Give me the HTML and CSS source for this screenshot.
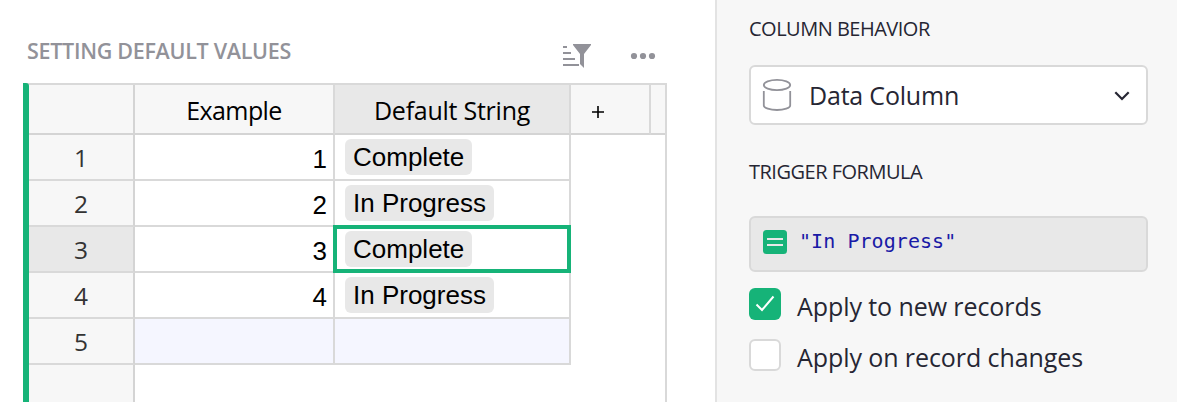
FILE: index.html
```html
<!DOCTYPE html>
<html lang="en">
<head>
<meta charset="utf-8">
<title>Setting default values</title>
<link rel="stylesheet" href="styles.css">
</head>
<body>
<div class="app">
  <main class="section">
    <header class="section-head">
      <h1 class="section-title">SETTING DEFAULT VALUES</h1>
      <svg class="icon-filter" width="30" height="26" viewBox="0 0 30 26">
        <path d="M1 3h4M1 9h8M1 15h12M1 21h16" fill="none" stroke="#929299" stroke-width="2"/>
        <path d="M11 0h18v1l-7 9v14l-4-4V10l-7-9z" fill="#929299"/>
      </svg>
      <svg class="icon-more" width="26" height="8" viewBox="0 0 26 8">
        <g fill="#929299"><circle cx="4" cy="4" r="3.1"/><circle cx="13" cy="4" r="3.1"/><circle cx="22" cy="4" r="3.1"/></g>
      </svg>
    </header>
    <div class="grid">
      <div class="row head">
        <div class="num"></div>
        <div class="cell c1">Example</div>
        <div class="cell c2 active"><span class="wide">Default String</span></div>
        <div class="cell add"><svg width="12" height="12" viewBox="0 0 12 12"><path d="M6 0v12M0 6h12" stroke="#000" stroke-width="1.6"/></svg></div>
        <div class="cell rest"></div>
      </div>
      <div class="row"><div class="num">1</div><div class="cell c1">1</div><div class="cell c2"><span class="tag">Complete</span></div></div>
      <div class="row"><div class="num">2</div><div class="cell c1">2</div><div class="cell c2"><span class="tag">In Progress</span></div></div>
      <div class="row"><div class="num active">3</div><div class="cell c1">3</div><div class="cell c2 cursor"><span class="tag">Complete</span></div></div>
      <div class="row"><div class="num">4</div><div class="cell c1">4</div><div class="cell c2"><span class="tag">In Progress</span></div></div>
      <div class="row new"><div class="num">5</div><div class="cell c1"></div><div class="cell c2"></div></div>
      <div class="row tail"><div class="num"></div></div>
    </div>
  </main>
  <aside class="panel">
    <h2 class="label">COLUMN BEHAVIOR</h2>
    <div class="select">
      <svg class="icon-data" width="30" height="34" viewBox="0 0 30 34" fill="none" stroke="#929299" stroke-width="1.8">
        <ellipse cx="15" cy="7" rx="13.2" ry="5.2"/>
        <path d="M1.8 13v14.5C1.8 30 8 32 15 32s13.2-2 13.2-4.500V13"/>
      </svg>
      <span class="select-text">Data Column</span>
      <svg class="chevron" width="16" height="10" viewBox="0 0 16 10"><path d="M1.300 1.300L8 8l6.700-6.700" fill="none" stroke="#262633" stroke-width="2.200"/></svg>
    </div>
    <h2 class="label label-formula">TRIGGER FORMULA</h2>
    <div class="formula">
      <svg width="24" height="24" viewBox="0 0 24 24"><rect width="24" height="24" rx="3.500" fill="#16b378"/><path d="M4 9h16M4 15h16" stroke="#e8e8e8" stroke-width="2"/></svg>
      <code class="code">"In Progress"</code>
    </div>
    <div class="check">
      <span class="box checked"><svg width="20" height="18" viewBox="0 0 20 18"><path d="M1.500 9.500L7 15 18.500 1.500" fill="none" stroke="#fff" stroke-width="2"/></svg></span>
      <span class="check-text">Apply to new records</span>
    </div>
    <div class="check">
      <span class="box"></span>
      <span class="check-text">Apply on record changes</span>
    </div>
  </aside>
</div>
</body>
</html>
```
FILE: styles.css
```css
*, *::before, *::after { box-sizing: border-box; }
body { margin: 0; background: #fff; font-family: "Open Sans", "Noto Sans", sans-serif; font-size: 25px; color: #262633; }
.app { display: flex; width: 1177px; height: 402px; overflow: hidden; }
.section { width: 715px; padding-left: 23px; flex: none; }
.section-head { display: flex; align-items: flex-start; height: 83px; padding-left: 4px; }
.section-title { margin: 36px 0 0; width: 535px; font-size: 21.5px; line-height: 30px; font-weight: 600; letter-spacing: -0.3px; color: #929299; white-space: nowrap; }
.icon-filter { margin-top: 44px; flex: none; }
.icon-more { margin: 52px 0 0 38px; flex: none; }

.grid { width: 644px; height: 330px; border-top: 2px solid #d9d9d9; border-right: 2px solid #d9d9d9; position: relative; }
.grid::before { content: ""; position: absolute; left: 0; top: -2px; bottom: 0; width: 6px; background: #16b378; border-top-right-radius: 3px; }
.row { display: flex; height: 46px; padding-left: 6px; }
.num { width: 106px; background: #f7f7f7; border-right: 2px solid #d4d4d4; border-bottom: 2px solid #d9d9d9; text-align: center; line-height: 46px; color: #333; flex: none; font-size: 24.5px; }
.num.active, .cell.active { background: #e8e8e8; }
.cell { border-right: 2px solid #d9d9d9; border-bottom: 2px solid #d9d9d9; flex: none; color: #000; }
.c1 { width: 200px; padding-right: 6px; text-align: right; font: 26px/49px "Liberation Sans", Arial, sans-serif; }
.c2 { width: 236px; padding: 4px 0 0 10px; }
.tag { display: block; width: max-content; height: 36px; padding: 0 8px; border-radius: 6px; background: #e8e8e8; font: 26px/36px "Liberation Sans", Arial, sans-serif; }
.cursor { position: relative; }
.cursor::after { content: ""; position: absolute; left: -2px; top: -2px; width: 238px; height: 48px; border: 4px solid #16b378; }
.head { height: 50px; }
.head .num, .head .cell { background-color: #f7f7f7; border-bottom-color: #d4d4d4; }
.head .cell.active { background: #e8e8e8; }
.head .c1, .head .c2 { padding: 0; text-align: center; font: 25px/50px "Open Sans", "Noto Sans", sans-serif; letter-spacing: -0.6px; }
.head .wide { letter-spacing: -0.25px; }
.add { width: 80px; padding: 21px 0 0 21px; line-height: 0; }
.rest { width: 14px; border-right: 0; }
.new .cell { background: #f5f6ff; }
.tail .num { border-bottom: 0; }

.panel { flex: 1; border-left: 2px solid #e3e3e3; background: #f7f7f7; padding: 0 29px 0 32px; }
.label { margin: 14px 0 0; height: 30px; font-size: 20px; line-height: 30px; font-weight: 400; letter-spacing: -0.5px; white-space: nowrap; }
.select { display: flex; align-items: center; margin-top: 21px; height: 60px; padding: 0 16px 0 11px; border: 2px solid #d9d9d9; border-radius: 6px; background: #fff; }
.select-text { margin-left: 17px; flex: 1; letter-spacing: -0.2px; }
.chevron { margin-top: 2px; }
.label-formula { margin-top: 32px; }
.formula { display: flex; margin-top: 29px; height: 56px; padding: 12px 0 0 12px; border: 2px solid #d9d9d9; border-radius: 6px; background: #e8e8e8; }
.code { margin: -1px 0 0 12px; font: 20px/24px "DejaVu Sans Mono", monospace; letter-spacing: 0.06px; color: #1a1aa6; }
.check { display: flex; height: 32px; margin-top: 16px; }
.check + .check { margin-top: 19px; }
.box { width: 32px; height: 32px; border: 2px solid #d9d9d9; border-radius: 6px; background: #fff; }
.box.checked { display: flex; align-items: center; justify-content: center; border: 0; background: #16b378; }
.check-text { margin-left: 16px; line-height: 37px; letter-spacing: -0.08px; white-space: nowrap; }
```
